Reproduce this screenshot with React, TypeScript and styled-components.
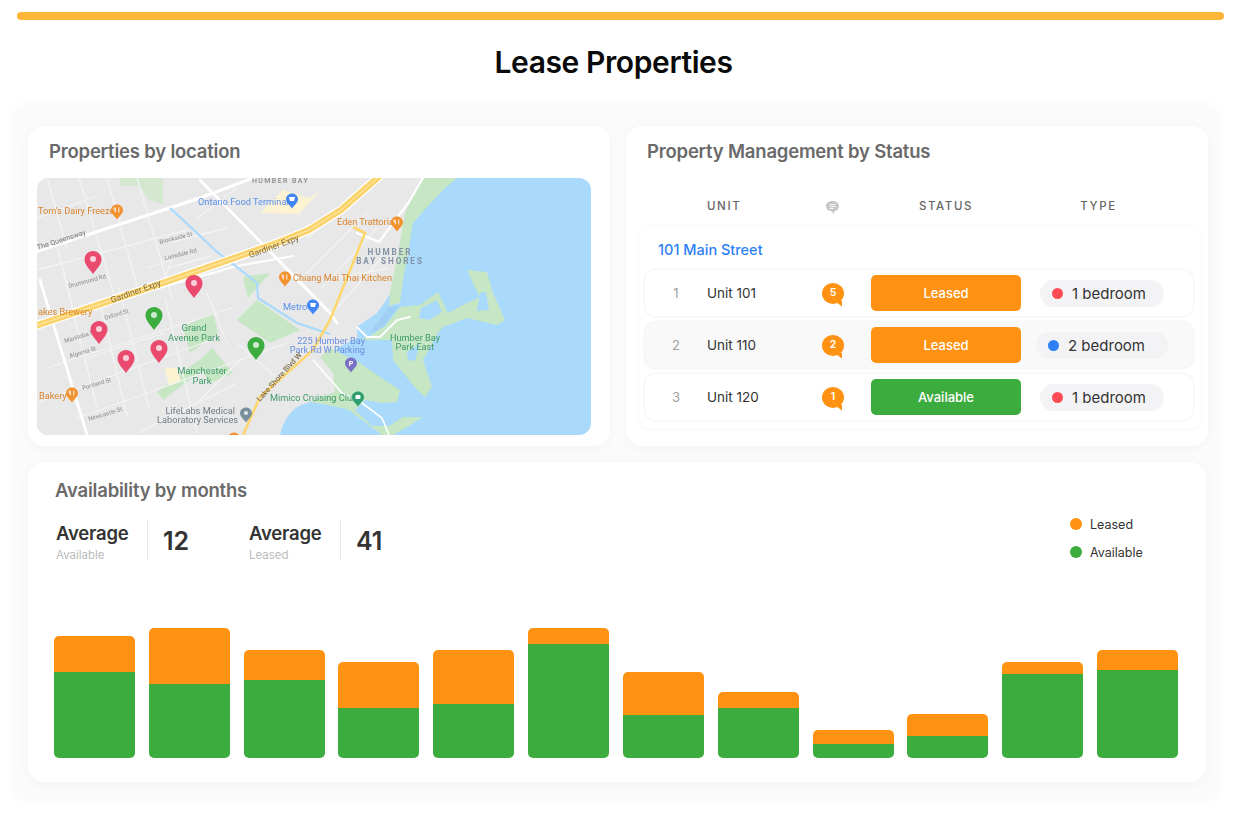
import React from "react";
import styled, { createGlobalStyle } from "styled-components";

const Global = createGlobalStyle`
  html, body { margin: 0; padding: 0; background: #fff; }
  body { font-family: Inter, "Liberation Sans", sans-serif; width: 1240px; height: 814px; overflow: hidden; }
  * { box-sizing: border-box; }
`;

const ORANGE = "#ff9212";
const GREEN = "#3dac3f";

const Page = styled.div`
  width: 1240px;
  padding: 12px 16px 0 12px;
`;
const TopBar = styled.div`
  height: 8px;
  margin: 0 0 0 5px;
  border-radius: 4px;
  background: #fdb537;
`;
const Title = styled.h1`
  margin: 0;
  height: 85px;
  padding-top: 23px;
  padding-right: 9px;
  text-align: center;
  font-size: 30px;
  line-height: 38px;
  font-weight: 600;
  letter-spacing: -0.4px;
  color: #0a0a0a;
`;
const Panel = styled.div`
  width: 1208px;
  height: 695px;
  padding: 21px 16px;
  border-radius: 16px;
  background: #fbfbfb;
  box-shadow: 0 0 10px 2px #fbfbfb;
  display: grid;
  grid-template-columns: 582px 582px;
  grid-template-rows: 320px 320px;
  column-gap: 16px;
  row-gap: 16px;
`;
const Card = styled.section`
  background: #fff;
  border-radius: 16px;
  box-shadow: 0 2px 14px rgba(0, 0, 0, 0.035);
  position: relative;
  min-width: 0;
`;
const WideCard = styled(Card)`
  grid-column: 1 / 3;
  width: 1178px;
  padding: 16px 28px 24px 26px;
  display: flex;
  flex-direction: column;
`;
const MapCard = styled(Card)`
  padding: 13px 19px 11px 9px;
  display: flex;
  flex-direction: column;
`;
const TableCard = styled(Card)`
  padding: 13px 7px 0 13px;
  display: flex;
  flex-direction: column;
`;
const CardTitle = styled.h2<{ $pl?: number }>`
  margin: 0;
  padding-left: ${(p) => p.$pl ?? 0}px;
  font-size: 18.5px;
  line-height: 25px;
  font-weight: 600;
  letter-spacing: -0.2px;
  color: #6a6a6a;
`;
const MapFrame = styled.div`
  margin-top: 14px;
  width: 554px;
  height: 257px;
  border-radius: 12px;
  overflow: hidden;
  background: #a9d9fb;
`;
const MapSvg = styled.svg`
  display: block;
  width: 554px;
  height: 257px;
  filter: blur(0.35px);
  font-family: Roboto, "Liberation Sans", sans-serif;
`;

/* table */
const COLS = "62px 115px 49px 150px 1fr";
const HeadRow = styled.div`
  margin-top: 32px;
  padding: 0 15px 0 6px;
  height: 20px;
  display: grid;
  grid-template-columns: ${COLS};
  align-items: center;
`;
const HeadCell = styled.div<{ $align?: string; $shift?: number }>`
  text-align: ${(p) => p.$align ?? "left"};
  font-size: 11.5px;
  font-weight: 500;
  letter-spacing: 1.6px;
  color: #666;
  padding-right: ${(p) => p.$shift ?? 0}px;
  line-height: 20px;
`;
const IconCell = styled.div`
  display: flex;
  padding: 2px 0 0 3px;
  height: 20px;
  align-items: center;
`;
const Group = styled.div`
  margin-top: 10px;
  width: 562px;
  height: 202px;
  border-radius: 10px;
  background: #fff;
  padding: 0 8px 0 6px;
  box-shadow: 0 1px 6px rgba(0, 0, 0, 0.04);
`;
const GroupTitle = styled.div`
  height: 44px;
  padding: 15px 0 0 13px;
  font-size: 14.5px;
  line-height: 18px;
  font-weight: 500;
  color: #2f80f7;
`;
const Rows = styled.div`
  display: flex;
  flex-direction: column;
  gap: 6px;
`;
const Row = styled.div<{ $alt?: boolean }>`
  height: 46px;
  width: 548px;
  border-radius: 10px;
  background: ${(p) => (p.$alt ? "#f9f9f9" : "#fff")};
  box-shadow: 0 0 3px rgba(0, 0, 0, 0.1);
  padding-right: 10px;
  display: grid;
  grid-template-columns: ${COLS};
  align-items: center;
`;
const Num = styled.div`
  text-align: center;
  width: 62px;
  font-size: 13px;
  color: #a0a0a0;
`;
const UnitName = styled.div`
  font-size: 13.5px;
  color: #333;
`;
const Bubble = styled.div`
  position: relative;
  width: 22px;
  height: 21px;
  border-radius: 50%;
  background: ${ORANGE};
  color: #fff;
  font-size: 10.5px;
  font-weight: 600;
  line-height: 20px;
  text-align: center;
  &::after {
    content: "";
    position: absolute;
    right: 2px;
    bottom: -3px;
    width: 8px;
    height: 6px;
    background: ${ORANGE};
    clip-path: polygon(0 0, 100% 0, 100% 100%);
  }
`;
const StatusBtn = styled.div<{ $color: string }>`
  width: 150px;
  height: 36px;
  border-radius: 5px;
  background: ${(p) => p.$color};
  color: #fff;
  font-size: 13px;
  font-weight: 500;
  line-height: 37px;
  text-align: center;
`;
const TypeCell = styled.div`
  display: flex;
  justify-content: center;
`;
const Pill = styled.div<{ $wide?: boolean }>`
  height: 27px;
  width: ${(p) => (p.$wide ? 132 : 124)}px;
  border-radius: 14px;
  background: #f3f3f5;
  display: flex;
  align-items: center;
  gap: 9px;
  padding-left: 12px;
  font-size: 15px;
  color: #333;
`;
const Dot = styled.span<{ $color: string; $size?: number }>`
  flex: none;
  display: block;
  width: ${(p) => p.$size ?? 11}px;
  height: ${(p) => p.$size ?? 11}px;
  border-radius: 50%;
  background: ${(p) => p.$color};
`;

/* chart card */
const StatsBar = styled.div`
  margin-top: 18px;
  display: flex;
  justify-content: space-between;
  align-items: flex-start;
`;
const Stats = styled.div`
  display: flex;
  padding-left: 2px;
`;
const Stat = styled.div`
  width: 193px;
  display: flex;
  height: 38px;
`;
const StatLabel = styled.div`
  width: 92px;
  border-right: 1px solid #e8e8e8;
`;
const StatName = styled.div`
  font-size: 18.5px;
  line-height: 24px;
  font-weight: 600;
  letter-spacing: -0.2px;
  color: #333;
`;
const StatSub = styled.div`
  font-size: 11.5px;
  line-height: 14px;
  margin-top: 3px;
  color: #bbb;
`;
const StatValue = styled.div`
  padding-left: 15px;
  font-size: 25px;
  line-height: 40px;
  font-weight: 600;
  color: #333;
`;
const Legend = styled.div`
  width: 108px;
  margin-top: -6px;
  display: flex;
  flex-direction: column;
  gap: 10px;
`;
const LegendItem = styled.div`
  display: flex;
  align-items: center;
  gap: 8px;
  height: 18px;
  font-size: 12.5px;
  color: #333;
`;
const Chart = styled.div`
  margin-top: auto;
  display: flex;
  justify-content: space-between;
  align-items: flex-end;
  height: 130px;
`;
const Bar = styled.div`
  width: 81px;
  border-radius: 5px;
  overflow: hidden;
  display: flex;
  flex-direction: column;
`;
const BarPart = styled.div<{ $color: string; $h: number }>`
  height: ${(p) => p.$h}px;
  background: ${(p) => p.$color};
`;

const rows = [
  { n: 1, unit: "Unit 101", c: 5, status: "Leased", color: ORANGE, type: "1 bedroom", dot: "#ff4b55" },
  { n: 2, unit: "Unit 110", c: 2, status: "Leased", color: ORANGE, type: "2 bedroom", dot: "#2f80f7", wide: true },
  { n: 3, unit: "Unit 120", c: 1, status: "Available", color: GREEN, type: "1 bedroom", dot: "#ff4b55" },
];
const bars = [
  [36, 86], [56, 74], [30, 78], [46, 50], [54, 54], [16, 114],
  [43, 43], [16, 50], [14, 14], [22, 22], [12, 84], [20, 88],
];

const PIN = "M0 0c4.7 0 8.5 3.700 8.500 8.400 0 5.200-5.200 9.600-8.500 14.600-3.300-5-8.500-9.400-8.500-14.600C-8.500 3.700-4.700 0 0 0z";
const Pin = ({ x, y, c }: { x: number; y: number; c: string }) => (
  <g transform={`translate(${x} ${y})`}>
    <path d={PIN} fill={c} />
    <circle cx="0" cy="8" r="3" fill="#fff" fillOpacity="0.75" />
  </g>
);
const Poi = ({ x, y, c, k }: { x: number; y: number; c: string; k?: string }) => (
  <g transform={`translate(${x} ${y})`}>
    <path d="M0-6.500c3.400 0 6 2.600 6 5.700 0 3.600-3.600 5.600-6 9.300-2.400-3.700-6-5.700-6-9.300 0-3.100 2.600-5.700 6-5.700z" fill={c} />
    {k === "fork" && <path d="M-1.800-3.500v5M1.800-3.500v5M-3-3.500v1.500c0 1 1 1.500 2 1.500" stroke="#fff" strokeWidth="0.9" fill="none" />}
    {k === "bag" && <path d="M-3-3h6l-1 4h-4zM-1-1h2v2h-2z" fill="#fff" />}
    {k === "dot" && <circle cx="0" cy="-1" r="2" fill="#fff" fillOpacity="0.8" />}
    {k === "p" && <text x="0" y="1.500" textAnchor="middle" fontSize="7" fontWeight="700" fill="#fff">P</text>}
    {k === "box" && <rect x="-2.500" y="-3" width="5" height="4" rx="1" fill="#fff" />}
  </g>
);
const Label = ({ x, y, c, s = 9.2, w, a, r, ls, children }: {
  x: number; y: number; c: string; s?: number; w?: number; a?: "start" | "middle" | "end"; r?: number; ls?: number; children: React.ReactNode;
}) => (
  <text
    x={x}
    y={y}
    fill={c}
    fontSize={s}
    fontWeight={w ?? 400}
    textAnchor={a ?? "start"}
    letterSpacing={ls}
    transform={r ? `rotate(${r} ${x} ${y})` : undefined}
  >
    {children}
  </text>
);

const ST = "#f3f3f3";
const MAJOR = "#ffffff";
const PARK = "#c6e6c4";
const LAND = "#e8e8e9";
const WATER = "#a9d9fb";
const streets = [
  "M0 92L150 52", "M0 40L60 18", "M42 0L78 120", "M70 0L100 108", "M100 0L135 120",
  "M18 60L36 130", "M26 92L60 230", "M10 190L195 130", "M0 225L180 160", "M40 240L250 165",
  "M50 180L128 155", "M100 255L200 205", "M110 90L135 82L128 100", "M128 120L160 255",
  "M82 110L112 230", "M62 120L90 238", "M130 65L190 50", "M130 90L175 78", "M170 115L190 165",
  "M200 165L240 200", "M160 225L205 180", "M265 100L330 35", "M285 110L340 50", "M300 130L345 80",
  "M270 60L320 20", "M300 100L352 90", "M10 0L30 70", "M160 40L200 10",
];

const MapDrawing = () => (
  <MapSvg viewBox="0 0 554 257" aria-label="map">
    <path d="M0 0H392L370 35L362 75L354 115L340 135L320 149L320 160L300 170L298 214L262 228Q248 236 243 257H0Z" fill={LAND} />
    <path d="M83 0H126L126 26L112 22L103 8H83Z" fill="#d3e8cf" />
    <path d="M223 35L246 12L272 20L282 14L262 36Z" fill="#fbf3d2" />
    <path d="M146 149L176 135L181 155L153 175Z" fill={PARK} />
    <path d="M160 185L175 170L196 195L173 205Z" fill={PARK} />
    <path d="M126 222L120 214L162 182L168 190Z" fill={PARK} />
    <path d="M200 142L220 122L263 152L233 165Z" fill={PARK} />
    <path d="M206 99L233 95L211 120Z" fill={PARK} />
    <path d="M128 190H140L144 203L132 208Z" fill="#fbf3d2" />
    {/* shore strip */}
    <path d="M385 0H420L406 12L390 29L376 45L371 75L366 102L363 125L352 128L353 115L361 75L368 35Z" fill={PARK} />
    {/* lagoon */}
    <path d="M333 155L352 129L362 128L345 150Z" fill="#9fcff2" />
    {/* peninsula */}
    <path d="M323 162L333 158L348 148L363 129L383 127L401 114L411 135L430 125L443 119L436 105L430 92L450 94L456 115L468 142L460 147L430 140L406 149L401 155L386 182L395 209L388 219L380 212L356 182L355 162Z" fill={PARK} />
    <path d="M384 130L400 122L405 134L392 142L382 140Z" fill={WATER} />
    <path d="M443 115L449 114L452 132L440 133Z" fill={WATER} />
    <path d="M370 174L383 165L378 183L371 182Z" fill={WATER} />
    {/* lower park */}
    <path d="M283 179L293 170L323 185L343 199L363 212L360 224L346 225L328 222L318 232L335 248L352 248L366 239L386 239L372 248L356 257H345L312 232L296 228L273 224L262 228L298 214L296 195Z" fill={PARK} />
    <g stroke={ST} strokeWidth="1.300" fill="none">
      {streets.map((d) => <path key={d} d={d} />)}
    </g>
    <g stroke={MAJOR} fill="none" strokeLinecap="round">
      <path d="M-2 74L163 20L232 -6" strokeWidth="3" />
      <path d="M163 2L293 135L300 145" strokeWidth="2.800" />
      <path d="M3 102L50 257" strokeWidth="2.800" />
      <path d="M122 110L200 88L256 78" strokeWidth="2.200" />
      <path d="M320 149L330 159L343 159L360 142L373 139" strokeWidth="1.800" />
      <path d="M276 182L305 215L325 225L345 240L352 257" strokeWidth="1.600" />
      <path d="M320 55L342 64M342 64L372 24L386 0" strokeWidth="2.200" />
    </g>
    <path d="M133 30L160 55L180 74L200 89L220 105L221 120L260 145L293 156" stroke={WATER} strokeWidth="2.200" fill="none" />
    <path d="M206 257L223 219L276 172L293 142L316 85L328 55L316 49" stroke="#fdd66e" strokeWidth="2.600" fill="none" />
    <path d="M-2 148L120 107L240 65L272 52L304 32L345 -4" stroke="#fff" strokeWidth="9" fill="none" />
    <path d="M-2 148L120 107L240 65L272 52L304 32L345 -4" stroke="#fbd36b" strokeWidth="6.400" fill="none" />
    <path d="M-2 148L120 107L240 65L272 52L304 32L345 -4" stroke="#fff1c4" strokeWidth="0.800" fill="none" />

    <Label x={215} y={5} c="#8a8a8a" s={7} w={500} ls={1.4}>HUMBER BAY</Label>
    <Label x={161} y={27} c="#5c8fe6" s={9.2}>Ontario Food Terminal</Label>
    <Label x={1} y={36} c="#d9832b" s={9.2}>Tom's Dairy Freeze</Label>
    <Label x={1} y={72} c="#777" s={7.2} r={-18}>The Queensway</Label>
    <Label x={213} y={80} c="#80704a" s={8.6} r={-20}>Gardiner Expy</Label>
    <Label x={75} y={125} c="#80704a" s={8.6} r={-20}>Gardiner Expy</Label>
    <Label x={1} y={137} c="#d9832b" s={9.2}>akes Brewery</Label>
    <Label x={256} y={103} c="#d9832b" s={9.2}>Chiang Mai Thai Kitchen</Label>
    <Label x={300} y={47} c="#d9832b" s={9.2}>Eden Trattoria</Label>
    <Label x={246} y={132} c="#5c8fe6" s={9.2}>Metro</Label>
    <Label x={157} y={153} c="#3f9a68" s={9.4} a="middle">Grand</Label>
    <Label x={157} y={163} c="#3f9a68" s={9.4} a="middle">Avenue Park</Label>
    <Label x={165} y={196} c="#3f9a68" s={9.4} a="middle">Manchester</Label>
    <Label x={165} y={206} c="#3f9a68" s={9.4} a="middle">Park</Label>
    <Label x={2} y={221} c="#d9832b" s={9.2}>Bakery</Label>
    <Label x={198} y={236} c="#6f7c86" s={9.2} a="end">LifeLabs Medical</Label>
    <Label x={201} y={245} c="#6f7c86" s={9.2} a="end">Laboratory Services</Label>
    <Label x={328} y={166} c="#6a8fe0" s={9.2} a="end">225 Humber Bay</Label>
    <Label x={328} y={175} c="#6a8fe0" s={9.2} a="end">Park Rd W Parking</Label>
    <Label x={233} y={223} c="#3f9a68" s={9.2}>Mimico Cruising Club</Label>
    <Label x={378} y={163} c="#3f9a68" s={9.2} a="middle">Humber Bay</Label>
    <Label x={378} y={172} c="#3f9a68" s={9.2} a="middle">Park East</Label>
    <Label x={353} y={77} c="#8492a6" s={8.2} w={700} a="middle" ls={1.9}>HUMBER</Label>
    <Label x={353} y={86} c="#8492a6" s={8.2} w={700} a="middle" ls={1.9}>BAY SHORES</Label>
    <Label x={223} y={224} c="#80704a" s={7.6} w={500} r={-48}>Lake Shore Blvd W</Label>
    <Label x={32} y={110} c="#888" s={6} r={-15}>Drummond Rd</Label>
    <Label x={68} y={142} c="#888" s={6} r={-17}>Oxford St</Label>
    <Label x={28} y={165} c="#888" s={6} r={-17}>Manitoba St</Label>
    <Label x={33} y={180} c="#888" s={6} r={-17}>Algoma St</Label>
    <Label x={46} y={212} c="#888" s={6} r={-17}>Portland St</Label>
    <Label x={52} y={243} c="#888" s={6} r={-17}>Newcastle St</Label>
    <Label x={123} y={66} c="#888" s={6} r={-14}>Brookside St</Label>
    <Label x={128} y={82} c="#888" s={6} r={-14}>Lonsdale Rd</Label>

    <Poi x={80} y={33} c="#f2912d" k="fork" />
    <Poi x={248} y={100} c="#f2912d" k="fork" />
    <Poi x={360} y={45} c="#f2912d" k="fork" />
    <Poi x={35} y={216} c="#f2912d" k="fork" />
    <Poi x={197} y={261} c="#f2912d" />
    <Poi x={255} y={22} c="#4285f4" k="bag" />
    <Poi x={276} y={128} c="#4285f4" k="bag" />
    <Poi x={314} y={186} c="#7b72c8" k="p" />
    <Poi x={321} y={220} c="#2f9e6e" k="box" />
    <Poi x={209} y={236} c="#78909c" k="dot" />

    <Pin x={56} y={73} c="#e94a6e" />
    <Pin x={157} y={97} c="#e94a6e" />
    <Pin x={117} y={129} c="#3dac3f" />
    <Pin x={62} y={143} c="#e94a6e" />
    <Pin x={89} y={172} c="#e94a6e" />
    <Pin x={122} y={162} c="#e94a6e" />
    <Pin x={219} y={159} c="#3dac3f" />
  </MapSvg>
);

const ChatIcon = () => (
  <svg width="15" height="15" viewBox="0 0 15 15">
    <path d="M7.500 1C11.200 1 14 3.200 14 6.200c0 2.600-2 4.600-4.600 5L9 14l-2.600-2.800C3.400 11 1 9 1 6.200 1 3.200 3.800 1 7.500 1z" fill="#c4c6c8" />
    <path d="M4.500 4.600h6M4.500 6.600h6M4.500 8.600h4" stroke="#fff" strokeWidth="0.9" />
  </svg>
);

export default function App() {
  return (
    <>
      <Global />
      <Page>
        <TopBar />
        <Title>Lease Properties</Title>
        <Panel>
          <MapCard>
            <CardTitle $pl={12}>Properties by location</CardTitle>
            <MapFrame>
              <MapDrawing />
            </MapFrame>
          </MapCard>
          <TableCard>
            <CardTitle $pl={8}>Property Management by Status</CardTitle>
            <HeadRow>
              <div />
              <HeadCell>UNIT</HeadCell>
              <IconCell><ChatIcon /></IconCell>
              <HeadCell $align="center">STATUS</HeadCell>
              <HeadCell $align="center" $shift={10}>TYPE</HeadCell>
            </HeadRow>
            <Group>
              <GroupTitle>101 Main Street</GroupTitle>
              <Rows>
                {rows.map((r) => (
                  <Row key={r.n} $alt={r.n === 2}>
                    <Num>{r.n}</Num>
                    <UnitName>{r.unit}</UnitName>
                    <Bubble>{r.c}</Bubble>
                    <StatusBtn $color={r.color}>{r.status}</StatusBtn>
                    <TypeCell>
                      <Pill $wide={r.wide}>
                        <Dot $color={r.dot} />
                        {r.type}
                      </Pill>
                    </TypeCell>
                  </Row>
                ))}
              </Rows>
            </Group>
          </TableCard>
          <WideCard>
            <CardTitle $pl={1}>Availability by months</CardTitle>
            <StatsBar>
              <Stats>
                <Stat>
                  <StatLabel>
                    <StatName>Average</StatName>
                    <StatSub>Available</StatSub>
                  </StatLabel>
                  <StatValue>12</StatValue>
                </Stat>
                <Stat>
                  <StatLabel>
                    <StatName>Average</StatName>
                    <StatSub>Leased</StatSub>
                  </StatLabel>
                  <StatValue>41</StatValue>
                </Stat>
              </Stats>
              <Legend>
                <LegendItem><Dot $color={ORANGE} $size={12} />Leased</LegendItem>
                <LegendItem><Dot $color={GREEN} $size={12} />Available</LegendItem>
              </Legend>
            </StatsBar>
            <Chart>
              {bars.map(([o, g], i) => (
                <Bar key={i}>
                  <BarPart $color={ORANGE} $h={o} />
                  <BarPart $color={GREEN} $h={g} />
                </Bar>
              ))}
            </Chart>
          </WideCard>
        </Panel>
      </Page>
    </>
  );
}
